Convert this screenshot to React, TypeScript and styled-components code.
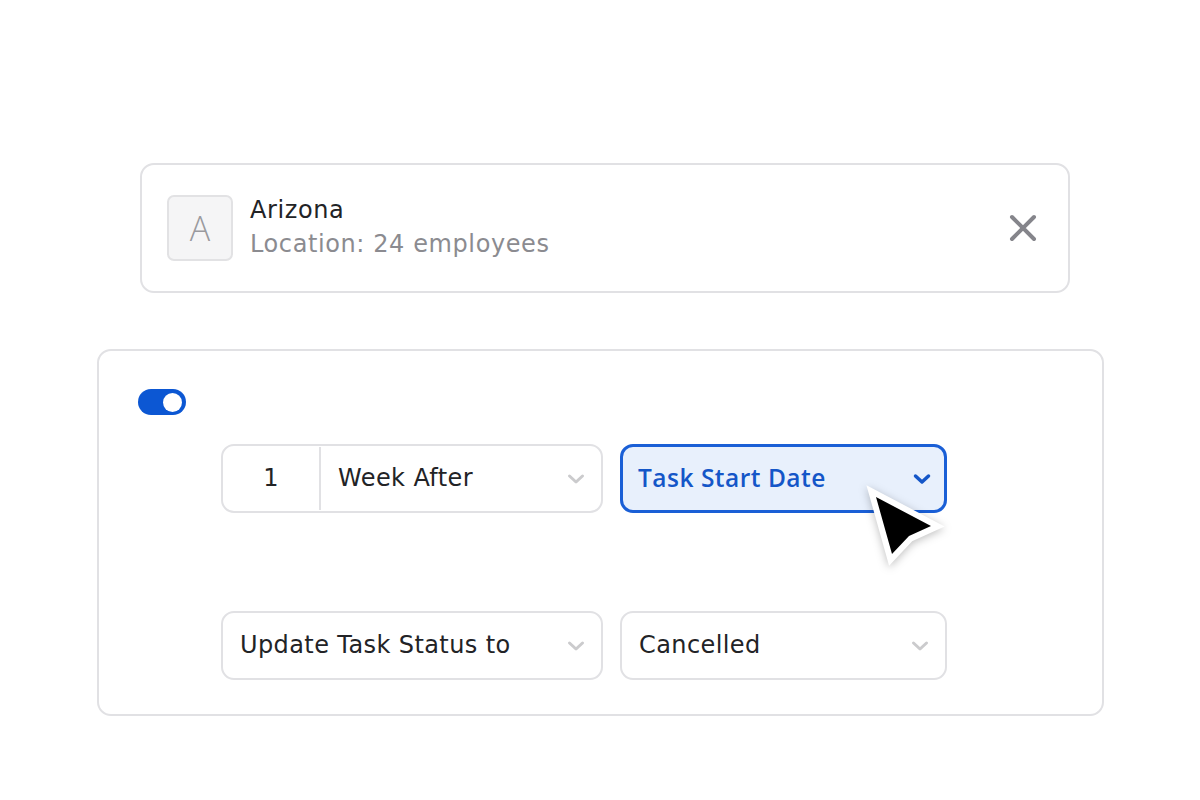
import React from "react";
import styled, { createGlobalStyle } from "styled-components";

const Global = createGlobalStyle`
  html, body { margin: 0; padding: 0; background: #ffffff; }
  body { font-family: "DejaVu Sans", sans-serif; color: #222326; }
`;

const Page = styled.div`
  width: 1200px;
  height: 800px;
  box-sizing: border-box;
  padding-top: 163px;
  display: flex;
  flex-direction: column;
`;

const LocationCard = styled.div`
  box-sizing: border-box;
  margin-left: 140px;
  width: 930px;
  height: 130px;
  border: 2px solid #e1e1e4;
  border-radius: 14px;
  display: flex;
  align-items: center;
  padding: 0 30px 0 25px;
`;

const Avatar = styled.div`
  box-sizing: border-box;
  width: 66px;
  height: 66px;
  border: 2px solid #e2e2e4;
  border-radius: 7px;
  background: #f5f5f6;
  display: flex;
  align-items: center;
  justify-content: center;
  font-family: "Open Sans", sans-serif;
  font-size: 34px;
  font-weight: 300;
  color: #9a9a9e;
`;

const Info = styled.div`
  display: flex;
  flex-direction: column;
  margin-left: 17px;
  flex: 1;
  margin-top: -2px;
  letter-spacing: 0.6px;
`;

const Name = styled.div`
  font-size: 24px;
  line-height: 34px;
  color: #222326;
`;

const Sub = styled.div`
  font-size: 24px;
  line-height: 34px;
  color: #8b8b90;
`;

const CloseButton = styled.div`
  width: 30px;
  height: 30px;
  display: flex;
  align-items: center;
  justify-content: center;
`;

const RuleCard = styled.div`
  box-sizing: border-box;
  margin-left: 97px;
  margin-top: 56px;
  width: 1007px;
  height: 367px;
  border: 2px solid #e1e1e4;
  border-radius: 14px;
  padding: 38px 0 0 39px;
  display: flex;
  flex-direction: column;
`;

const Toggle = styled.div`
  box-sizing: border-box;
  width: 48px;
  height: 26px;
  border-radius: 13px;
  background: #0c57d3;
  display: flex;
  align-items: center;
  justify-content: flex-end;
  padding-right: 4px;
`;

const Knob = styled.div`
  width: 19px;
  height: 19px;
  border-radius: 50%;
  background: #ffffff;
`;

const Rows = styled.div`
  display: grid;
  grid-template-columns: 382px 327px;
  column-gap: 17px;
  row-gap: 98px;
  margin-left: 83px;
  margin-top: 29px;
`;

const Field = styled.div<{ $active?: boolean }>`
  position: relative;
  box-sizing: border-box;
  height: 69px;
  border: ${(p) => (p.$active ? "3px solid #1a5fd6" : "2px solid #e1e1e4")};
  background: ${(p) => (p.$active ? "#e8f0fc" : "#ffffff")};
  border-radius: 13px;
  display: flex;
  align-items: center;
  font-size: 24px;
  letter-spacing: 0.4px;
  padding-bottom: 2px;
  color: #222326;
`;

const NumberPart = styled.div`
  width: 98px;
  height: 100%;
  margin-bottom: -2px;
  border-right: 2px solid #e1e1e4;
  display: flex;
  align-items: center;
  justify-content: center;
  padding-bottom: 2px;
  box-sizing: border-box;
`;

const Label = styled.div`
  flex: 1;
  padding-left: 17px;
`;

const ActiveLabel = styled.div`
  flex: 1;
  padding-left: 15px;
  font-family: "Open Sans", sans-serif;
  font-weight: 600;
  font-size: 24.5px;
  letter-spacing: 0.5px;
  color: #1456c8;
`;

const ChevronBox = styled.div<{ $right: number }>`
  width: 20px;
  margin-right: ${(p) => p.$right}px;
  display: flex;
  align-items: center;
  justify-content: center;
  padding-top: 2px;
`;

const Cursor = styled.svg`
  position: absolute;
  left: 236px;
  top: 32px;
  width: 100px;
  height: 100px;
  overflow: visible;
  filter: drop-shadow(0 2px 4px rgba(0, 0, 0, 0.25));
`;

const Chevron = ({ color, w = 3 }: { color: string; w?: number }) => (
  <svg width="18" height="12" viewBox="0 0 18 12">
    <path d="M2.5 3 L9 9 L15.5 3" fill="none" stroke={color} strokeWidth={w} strokeLinecap="round" strokeLinejoin="round" />
  </svg>
);

export default function App() {
  return (
    <>
      <Global />
      <Page>
        <LocationCard>
          <Avatar>A</Avatar>
          <Info>
            <Name>Arizona</Name>
            <Sub>Location: 24 employees</Sub>
          </Info>
          <CloseButton>
            <svg width="28" height="28" viewBox="0 0 28 28">
              <path d="M3 3 L25 25 M25 3 L3 25" stroke="#85858b" strokeWidth="4" strokeLinecap="round" />
            </svg>
          </CloseButton>
        </LocationCard>
        <RuleCard>
          <Toggle>
            <Knob />
          </Toggle>
          <Rows>
            <Field>
              <NumberPart>1</NumberPart>
              <Label>Week After</Label>
              <ChevronBox $right={15}>
                <Chevron color="#cbcbcd" />
              </ChevronBox>
            </Field>
            <Field $active>
              <ActiveLabel>Task Start Date</ActiveLabel>
              <ChevronBox $right={12}>
                <Chevron color="#1456c8" w={3.5} />
              </ChevronBox>
              <Cursor viewBox="0 0 100 100">
                <polygon
                  points="17,18 72,47 50,57 33,75"
                  fill="#000000"
                  stroke="#ffffff"
                  strokeWidth="12"
                  strokeLinejoin="miter"
                  strokeMiterlimit="10"
                  paintOrder="stroke"
                />
              </Cursor>
            </Field>
            <Field>
              <Label>Update Task Status to</Label>
              <ChevronBox $right={15}>
                <Chevron color="#cbcbcd" />
              </ChevronBox>
            </Field>
            <Field>
              <Label>Cancelled</Label>
              <ChevronBox $right={15}>
                <Chevron color="#cbcbcd" />
              </ChevronBox>
            </Field>
          </Rows>
        </RuleCard>
      </Page>
    </>
  );
}
